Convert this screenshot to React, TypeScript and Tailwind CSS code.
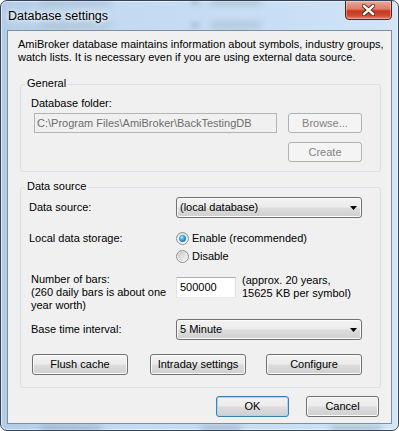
import type { ReactNode } from 'react'

// Win7-style "Database settings" dialog

function Button({
  children,
  className = '',
  disabled,
  isDefault,
}: {
  children: ReactNode
  className?: string
  disabled?: boolean
  isDefault?: boolean
}) {
  let look =
    'border-[#707070] text-black bg-[linear-gradient(#f2f2f2_0%,#ebebeb_48%,#dddddd_52%,#cfcfcf_100%)] shadow-[inset_0_0_0_1px_#fbfbfb]'
  if (disabled) look = 'border-[#adb2b5] text-[#838383] bg-[#f4f4f4]'
  if (isDefault)
    look =
      'border-[#3c7fb1] text-black bg-[linear-gradient(#f2f2f2_0%,#ebebeb_48%,#dddddd_52%,#cfcfcf_100%)] shadow-[inset_0_0_0_1px_#9fdcf6]'
  return (
    <div
      className={`flex items-center justify-center rounded-[3px] border text-[11px] ${look} ${className}`}
    >
      {children}
    </div>
  )
}

function Combo({ value }: { value: string }) {
  return (
    <div className="flex h-[21px] w-[186px] items-center justify-between rounded-[3px] border border-[#707070] bg-[linear-gradient(#f2f2f2_0%,#ebebeb_48%,#dddddd_52%,#cfcfcf_100%)] pl-[3px] pr-[4px] shadow-[inset_0_0_0_1px_#fbfbfb]">
      <span>{value}</span>
      <svg width="7" height="4" viewBox="0 0 7 4">
        <path d="M0 0h7L3.5 4z" fill="#000" />
      </svg>
    </div>
  )
}

function Radio({ checked, label }: { checked?: boolean; label: string }) {
  return (
    <div className="flex h-[16px] items-center gap-[3px]">
      <div className="flex h-[13px] w-[13px] items-center justify-center rounded-full border border-[#8e8f8f] bg-[linear-gradient(#dcdcdc,#ffffff)]">
        {checked ? (
          <div className="h-[7px] w-[7px] rounded-full bg-[radial-gradient(circle_at_40%_35%,#a6efff_0%,#2d9be0_45%,#0a4f8c_100%)]" />
        ) : (
          <div className="h-[9px] w-[9px] rounded-full bg-[linear-gradient(135deg,#c9c9c9,#f6f6f6)]" />
        )}
      </div>
      <span>{label}</span>
    </div>
  )
}

function Group({
  title,
  className = '',
  children,
}: {
  title: string
  className?: string
  children: ReactNode
}) {
  return (
    <div
      className={`relative ml-[12px] w-[361px] rounded-[3px] border border-[#d5dfe5] ${className}`}
    >
      <span className="absolute -top-[8px] left-[4px] bg-[#f0f0f0] px-[2px] leading-[13px]">
        {title}
      </span>
      {children}
    </div>
  )
}

export default function App() {
  return (
    <div className="relative h-[431px] w-[399px] overflow-hidden rounded-[7px] border border-[#33445a] bg-[linear-gradient(90deg,#b4cde6_0%,#c3daf1_30%,#c8def4_70%,#d3e5f7_100%)] font-['Liberation_Sans',Arial,sans-serif] text-[11px] text-black shadow-[inset_0_0_0_1px_rgba(255,255,255,0.55)]">
      {/* blurred stuff behind the glass */}
      <div className="absolute left-[40px] top-[-2px] h-[6px] w-[70px] bg-[#8e9cab]/30 blur-[3px]" />
      <div className="absolute left-[40px] top-[21px] h-[6px] w-[70px] bg-[#8e9cab]/30 blur-[3px]" />
      <div className="absolute left-[190px] top-[-2px] h-[6px] w-[8px] bg-[#7d8c9c]/30 blur-[2px]" />
      <div className="absolute left-[190px] top-[21px] h-[6px] w-[8px] bg-[#7d8c9c]/30 blur-[2px]" />
      <div className="absolute left-[210px] top-[-2px] h-[6px] w-[50px] bg-[#7d8c9c]/30 blur-[3px]" />
      <div className="absolute left-[210px] top-[21px] h-[6px] w-[50px] bg-[#7d8c9c]/30 blur-[3px]" />
      <div className="absolute left-[40px] top-[425px] h-[6px] w-[60px] bg-[#6f8193]/40 blur-[3px]" />
      <div className="absolute left-[200px] top-[425px] h-[6px] w-[40px] bg-[#6f8193]/40 blur-[3px]" />
      <div className="absolute left-[330px] top-[425px] h-[6px] w-[50px] bg-[#6f8193]/40 blur-[3px]" />

      {/* title bar */}
      <div className="relative flex h-[29px] items-start justify-between pl-[7px] pr-[6px]">
        <span className="mt-[8px] text-[12.5px] leading-[15px] [text-shadow:0_0_8px_#fff,0_0_4px_#fff]">
          Database settings
        </span>
        <div className="-mt-[1px] flex h-[20px] w-[47px] items-center justify-center rounded-b-[4px] border border-[#5b2117] bg-[linear-gradient(#eaa99c_0%,#dc7b66_45%,#c7381f_55%,#cf4a2f_80%,#e0816a_100%)] shadow-[inset_0_0_0_1px_rgba(255,255,255,0.35)]">
          <svg width="13" height="12" viewBox="0 0 13 12">
            <path d="M2 2l9 8M11 2l-9 8" stroke="#4a1a12" strokeWidth="4.2" strokeLinecap="square" />
            <path d="M2 2l9 8M11 2l-9 8" stroke="#fff" strokeWidth="2.4" strokeLinecap="square" />
          </svg>
        </div>
      </div>

      {/* client area */}
      <div className="relative mx-[6px] flex h-[394px] flex-col border border-[#7f8e9c] bg-[#f0f0f0]">
        <p className="pl-[10px] pt-[7px] leading-[13px]">
          AmiBroker database maintains information about symbols, industry groups,
          <br />
          watch lists. It is necessary even if you are using external data source.
        </p>

        <Group title="General" className="mt-[20px] pb-[9px] pl-[10px] pr-[18px]">
          <div className="mt-[12px] leading-[13px]">Database folder:</div>
          <div className="mt-[3px] flex">
            <div className="ml-[3px] flex h-[20px] w-[243px] items-center border border-[#b4b4b4] bg-[#f0f0f0] pl-[2px] text-[#6d6d6d]">
              C:\Program Files\AmiBroker\BackTestingDB
            </div>
            <Button disabled className="ml-[11px] h-[20px] w-[74px]">
              Browse...
            </Button>
          </div>
          <div className="mt-[9px] flex justify-end">
            <Button disabled className="h-[20px] w-[74px]">
              Create
            </Button>
          </div>
        </Group>

        <Group title="Data source" className="mt-[15px] pb-[12px] pl-[8px]">
          <div className="mt-[9px] flex h-[21px] items-center">
            <span className="w-[147px]">Data source:</span>
            <Combo value="(local database)" />
          </div>

          <div className="mt-[12px] flex">
            <span className="w-[147px] leading-[16px]">Local data storage:</span>
            <div className="flex flex-col gap-[2px]">
              <Radio checked label="Enable (recommended)" />
              <Radio label="Disable" />
            </div>
          </div>

          <div className="mt-[9px] flex">
            <div className="w-[147px] whitespace-nowrap pl-[2px] leading-[13px]">
              Number of bars:
              <br />
              (260 daily bars is about one
              <br />
              year worth)
            </div>
            <div className="mt-[4px] flex h-[21px] w-[60px] items-center border border-[#abadb3] border-b-[#e3e9ef] border-l-[#e2e3ea] border-r-[#dbdfe6] bg-white pl-[3px]">
              500000
            </div>
            <div className="ml-[6px] mt-[1px] whitespace-nowrap leading-[13px]">
              (approx. 20 years,
              <br />
              15625 KB per symbol)
            </div>
          </div>

          <div className="mt-[7px] flex h-[21px] items-center">
            <span className="w-[147px] pl-[2px]">Base time interval:</span>
            <Combo value="5 Minute" />
          </div>

          <div className="mt-[14px] flex">
            <Button className="ml-[3px] h-[21px] w-[96px]">Flush cache</Button>
            <Button className="ml-[22px] h-[21px] w-[96px]">Intraday settings</Button>
            <Button className="ml-[20px] h-[21px] w-[96px]">Configure</Button>
          </div>
        </Group>

        <div className="mt-[8px] flex justify-end gap-[17px] pr-[12px]">
          <Button isDefault className="h-[21px] w-[73px]">
            OK
          </Button>
          <Button className="h-[21px] w-[73px]">Cancel</Button>
        </div>
      </div>
    </div>
  )
}
